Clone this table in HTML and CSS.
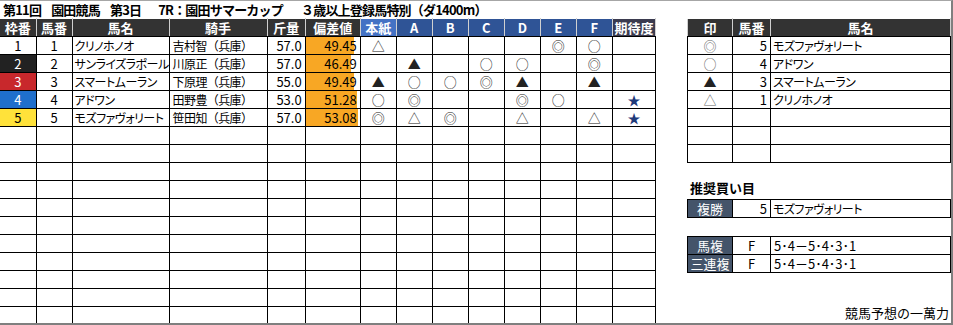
FILE: index.html
```html
<!DOCTYPE html>
<html lang="ja">
<head>
<meta charset="utf-8">
<title>園田競馬 7R</title>
<link rel="stylesheet" href="styles.css">
</head>
<body>
<div class="frame">
  <div class="left">
    <div class="title">
      <span class="t1">第11回</span>
      <span class="t2">園田競馬</span>
      <span class="t3">第3日</span>
      <span class="t4">7R：園田サマーカップ</span>
      <span class="t5">３歳以上登録馬特別（ダ1400m）</span>
    </div>
    <table class="main">
      <colgroup>
        <col class="c36"><col class="c36"><col class="c97"><col class="c98"><col class="c38"><col class="c55">
        <col class="c36"><col class="c36"><col class="c36"><col class="c36"><col class="c36"><col class="c36"><col class="c36"><col class="c43">
      </colgroup>
      <tr class="hrow">
        <th class="hd">枠番</th><th class="hd">馬番</th><th class="hd">馬名</th><th class="hd">騎手</th><th class="hd">斤量</th><th class="hd">偏差値</th>
        <th class="hb1">本紙</th><th class="hb2">A</th><th class="hb2">B</th><th class="hb2">C</th><th class="hb2">D</th><th class="hb2">E</th><th class="hb2">F</th><th class="hp">期待度</th>
      </tr>
      <tr>
        <td class="num w1">1</td><td class="num">1</td><td class="name">クリノホノオ</td><td class="jk">吉村智（兵庫）</td><td class="wt">57.0</td>
        <td class="dev"><div class="bar" style="width:48px"></div><span>49.45</span></td>
        <td class="mk">△</td><td class="mk"></td><td class="mk"></td><td class="mk"></td><td class="mk"></td><td class="mk">◎</td><td class="mk">○</td><td class="mk"></td>
      </tr>
      <tr>
        <td class="num w2">2</td><td class="num">2</td><td class="name">サンライズラポール</td><td class="jk">川原正（兵庫）</td><td class="wt">57.0</td>
        <td class="dev"><div class="bar" style="width:45px"></div><span>46.49</span></td>
        <td class="mk"></td><td class="mk">▲</td><td class="mk"></td><td class="mk">○</td><td class="mk">○</td><td class="mk"></td><td class="mk">◎</td><td class="mk"></td>
      </tr>
      <tr>
        <td class="num w3">3</td><td class="num">3</td><td class="name">スマートムーラン</td><td class="jk">下原理（兵庫）</td><td class="wt">55.0</td>
        <td class="dev"><div class="bar" style="width:48px"></div><span>49.49</span></td>
        <td class="mk">▲</td><td class="mk">○</td><td class="mk">○</td><td class="mk">◎</td><td class="mk">▲</td><td class="mk"></td><td class="mk">▲</td><td class="mk"></td>
      </tr>
      <tr>
        <td class="num w4">4</td><td class="num">4</td><td class="name">アドワン</td><td class="jk">田野豊（兵庫）</td><td class="wt">53.0</td>
        <td class="dev"><div class="bar" style="width:51px"></div><span>51.28</span></td>
        <td class="mk">○</td><td class="mk">◎</td><td class="mk"></td><td class="mk"></td><td class="mk">◎</td><td class="mk">○</td><td class="mk"></td><td class="mk star">★</td>
      </tr>
      <tr>
        <td class="num w5">5</td><td class="num">5</td><td class="name">モズファヴォリート</td><td class="jk">笹田知（兵庫）</td><td class="wt">57.0</td>
        <td class="dev"><div class="bar" style="width:52px"></div><span>53.08</span></td>
        <td class="mk">◎</td><td class="mk">△</td><td class="mk">◎</td><td class="mk"></td><td class="mk">△</td><td class="mk"></td><td class="mk">△</td><td class="mk star">★</td>
      </tr>
      <tr><td></td><td></td><td></td><td></td><td></td><td></td><td></td><td></td><td></td><td></td><td></td><td></td><td></td><td></td></tr>
      <tr><td></td><td></td><td></td><td></td><td></td><td></td><td></td><td></td><td></td><td></td><td></td><td></td><td></td><td></td></tr>
      <tr><td></td><td></td><td></td><td></td><td></td><td></td><td></td><td></td><td></td><td></td><td></td><td></td><td></td><td></td></tr>
      <tr><td></td><td></td><td></td><td></td><td></td><td></td><td></td><td></td><td></td><td></td><td></td><td></td><td></td><td></td></tr>
      <tr><td></td><td></td><td></td><td></td><td></td><td></td><td></td><td></td><td></td><td></td><td></td><td></td><td></td><td></td></tr>
      <tr><td></td><td></td><td></td><td></td><td></td><td></td><td></td><td></td><td></td><td></td><td></td><td></td><td></td><td></td></tr>
      <tr><td></td><td></td><td></td><td></td><td></td><td></td><td></td><td></td><td></td><td></td><td></td><td></td><td></td><td></td></tr>
      <tr><td></td><td></td><td></td><td></td><td></td><td></td><td></td><td></td><td></td><td></td><td></td><td></td><td></td><td></td></tr>
      <tr><td></td><td></td><td></td><td></td><td></td><td></td><td></td><td></td><td></td><td></td><td></td><td></td><td></td><td></td></tr>
      <tr><td></td><td></td><td></td><td></td><td></td><td></td><td></td><td></td><td></td><td></td><td></td><td></td><td></td><td></td></tr>
      <tr><td></td><td></td><td></td><td></td><td></td><td></td><td></td><td></td><td></td><td></td><td></td><td></td><td></td><td></td></tr>
    </table>
  </div>
  <div class="right">
    <table class="marks">
      <colgroup><col class="r45"><col class="r38"><col></colgroup>
      <tr class="hrow"><th class="hd">印</th><th class="hd">馬番</th><th class="hd">馬名</th></tr>
      <tr><td class="mk gray">◎</td><td class="rn">5</td><td class="name">モズファヴォリート</td></tr>
      <tr><td class="mk gray">○</td><td class="rn">4</td><td class="name">アドワン</td></tr>
      <tr><td class="mk">▲</td><td class="rn">3</td><td class="name">スマートムーラン</td></tr>
      <tr><td class="mk gray">△</td><td class="rn">1</td><td class="name">クリノホノオ</td></tr>
      <tr><td></td><td></td><td></td></tr>
      <tr><td></td><td></td><td></td></tr>
      <tr><td></td><td></td><td></td></tr>
    </table>
    <div class="rec-title">推奨買い目</div>
    <table class="rec">
      <colgroup><col class="r45"><col class="r38"><col></colgroup>
      <tr><td class="lab">複勝</td><td class="rn">5</td><td class="name">モズファヴォリート</td></tr>
    </table>
    <table class="rec rec2">
      <colgroup><col class="r45"><col class="r38"><col></colgroup>
      <tr><td class="lab">馬複</td><td class="ctr">F</td><td class="combo">5･4－5･4･3･1</td></tr>
      <tr><td class="lab">三連複</td><td class="ctr">F</td><td class="combo">5･4－5･4･3･1</td></tr>
    </table>
    <div class="credit">競馬予想の一萬力</div>
  </div>
</div>
</body>
</html>
```

FILE: styles.css
```css
* { box-sizing: border-box; }

body {
  margin: 0;
  background: #fff;
  color: #000;
  font-family: "Noto Sans CJK JP", "Noto Sans", sans-serif;
}

.frame {
  width: 953px;
  height: 325px;
  border-top: 1px solid #a6a6a6;
  border-right: 2px solid #7f7f7f;
  border-bottom: 2px solid #7f7f7f;
  display: flex;
  overflow: hidden;
}

.left { width: 656px; flex: none; }

.title {
  height: 17px;
  padding-left: 3px;
  display: flex;
  white-space: nowrap;
  font-size: 13px;
  font-weight: bold;
  line-height: 17px;
  letter-spacing: -0.8px;
}
.title .t2 { margin-left: 10px; }
.title .t3 { margin-left: 10px; }
.title .t4 { margin-left: 17px; }
.title .t5 { margin-left: 18px; }

table {
  border-collapse: collapse;
  table-layout: fixed;
}

.c36 { width: 36px; }
.c97 { width: 97px; }
.c98 { width: 98px; }
.c38 { width: 38px; }
.c55 { width: 55px; }
.c43 { width: 43px; }
.r45 { width: 45px; }
.r38 { width: 38px; }

.main { width: 656px; }

.main tr, .marks tr, .rec tr { height: 18px; }

td, th {
  border: 1px solid #000;
  padding: 0;
  font-size: 12px;
  line-height: 16px;
  white-space: nowrap;
  overflow: hidden;
}

th {
  color: #fff;
  font-weight: bold;
  font-size: 13px;
  text-align: center;
  border-color: #fff #d0d0d0 #000 #d0d0d0;
}
.hd { background: #333333; }
.hb1 { background: #4472c4; }
.hb2 { background: #2f5496; }
.hp { background: #3b3b4f; }

.main tr > :first-child { border-left: none; }

.num { text-align: center; font-size: 13px; }
.w1 { background: #fff; }
.w2 { background: #222; color: #fff; }
.w3 { background: #c8282c; color: #fff; }
.w4 { background: #1f6fcc; color: #fff; }
.w5 { background: #ffe23a; }

.name {
  padding-left: 2px;
  font-feature-settings: "palt";
  letter-spacing: -0.5px;
}

.jk { padding-left: 3px; letter-spacing: -0.6px; }

.wt { text-align: right; padding-right: 3px; font-size: 13px; }

.dev {
  position: relative;
  text-align: right;
  padding-right: 3px;
  font-size: 13px;
}
.dev .bar {
  position: absolute;
  left: 0;
  top: 0;
  bottom: 0;
  background: #f8a724;
}
.dev span { position: relative; }

.mk { text-align: center; font-size: 13px; line-height: 16px; color: #222; }
.star { color: #1f3a7a; }
.gray { color: #666; }

.right {
  margin-left: 31px;
  width: 264px;
  flex: none;
  display: flex;
  flex-direction: column;
}

.marks { width: 264px; margin-top: 17px; }
.rn { text-align: right; padding-right: 3px; font-size: 13px; }

.rec-title {
  margin-top: 14px;
  height: 22px;
  padding-left: 3px;
  font-size: 13px;
  font-weight: bold;
  line-height: 22px;
}

.rec { width: 264px; }
.rec2 { margin-top: 18px; }

.lab {
  background: #44546a;
  color: #fff;
  text-align: center;
  font-size: 13px;
}
.ctr { text-align: center; font-size: 13px; }
.combo { padding-left: 3px; font-size: 13px; }

.credit {
  margin-top: auto;
  padding-right: 2px;
  margin-bottom: 1px;
  text-align: right;
  font-size: 13px;
  line-height: 18px;
}
```
